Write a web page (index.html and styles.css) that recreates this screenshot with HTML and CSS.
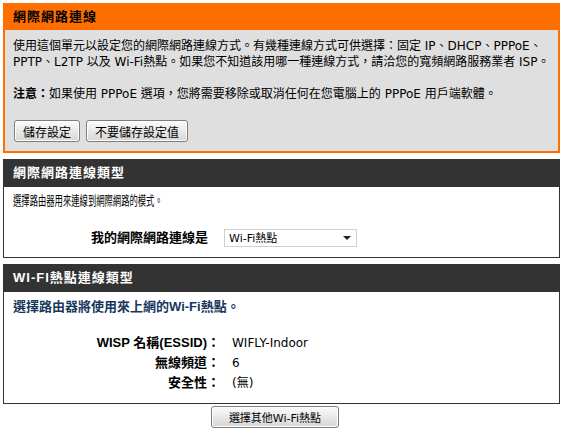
FILE: index.html
```html
<!DOCTYPE html>
<html lang="zh-Hant">
<head>
    <meta charset="UTF-8">
    <title>網際網路連線</title>
    <link rel="stylesheet" href="styles.css">
</head>
<body>
    <div class="page">
        <div class="box box-orange">
            <h2 class="box-head">網際網路連線</h2>
            <div class="box-body">
                <p>使用這個單元以設定您的網際網路連線方式。有幾種連線方式可供選擇：固定 IP、DHCP、PPPoE、<br>PPTP、L2TP 以及 Wi-Fi熱點。如果您不知道該用哪一種連線方式，請洽您的寬頻網路服務業者 ISP。</p>
                <p class="note"><b>注意：</b>如果使用 PPPoE 選項，您將需要移除或取消任何在您電腦上的 PPPoE 用戶端軟體。</p>
                <div class="actions">
                    <button class="btn">儲存設定</button>
                    <button class="btn">不要儲存設定值</button>
                </div>
            </div>
        </div>

        <div class="box">
            <h2 class="box-head">網際網路連線類型</h2>
            <div class="box-body">
                <p><span class="narrow">選擇路由器用來連線到網際網路的模式。</span></p>
                <div class="field-row">
                    <label class="field-label" for="wanType">我的網際網路連線是</label>
                    <span class="select-wrap">
                        <select id="wanType" class="select">
                            <option>Wi-Fi熱點</option>
                        </select>
                        <svg class="select-arrow" width="8" height="4" viewBox="0 0 8 4"><path d="M0 0h8L4 4z" fill="#222"/></svg>
                    </span>
                </div>
            </div>
        </div>

        <div class="box">
            <h2 class="box-head">WI-FI熱點連線類型</h2>
            <div class="box-body">
                <p class="tip">選擇路由器將使用來上網的Wi-Fi熱點。</p>
                <div class="info">
                    <div class="info-row"><span class="info-label">WISP 名稱(ESSID)：</span><span>WIFLY-Indoor</span></div>
                    <div class="info-row"><span class="info-label">無線頻道：</span><span>6</span></div>
                    <div class="info-row"><span class="info-label">安全性：</span><span>(無)</span></div>
                </div>
            </div>
        </div>

        <div class="bottom">
            <button class="btn btn-small">選擇其他Wi-Fi熱點</button>
        </div>
    </div>
</body>
</html>
```

FILE: styles.css
```css
body {
    margin: 0;
    background: #fff;
    color: #000;
    font-family: "DejaVu Sans", "Noto Sans CJK TC", sans-serif;
    font-size: 12px;
    line-height: 16px;
}
.page {
    width: 557px;
    margin: 3px 5px 0 3px;
}
p {
    margin: 0;
}
.box {
    margin-bottom: 6px;
    background: #fff;
}
.box-head {
    margin: 0;
    height: 28px;
    padding-left: 10px;
    background: #333;
    color: #fff;
    font-family: "Liberation Sans", "Noto Sans CJK TC", sans-serif;
    font-size: 13px;
    letter-spacing: 1px;
    line-height: 28px;
}
.box-body {
    border: 1px solid #333;
    border-top: none;
    padding: 6px 9px 10px;
}
.box-orange .box-head {
    height: 27px;
    line-height: 27px;
    background: #ff6f00;
    color: #000;
}
.box-orange .box-body {
    background: #dfdfdf;
    border: 2px solid #ff6f00;
    border-top: none;
    padding: 8px 8px 9px;
}
.note {
    margin-top: 16px;
}
.actions {
    display: flex;
    gap: 6px;
    margin-top: 18px;
    padding-left: 1px;
}
.btn {
    height: 22px;
    padding: 0 8px;
    border: 1px solid #7d7d7d;
    border-radius: 3px;
    background: linear-gradient(#fcfcfc, #e8e8e8 50%, #d6d6d6);
    box-shadow: inset 0 0 0 1px #fff;
    font-family: "DejaVu Sans", "Noto Sans CJK TC", sans-serif;
    font-size: 12px;
    color: #000;
}
.narrow {
    display: inline-block;
    font-size: 13px;
    transform: scaleX(0.64);
    transform-origin: left center;
    white-space: nowrap;
}
.field-row {
    display: flex;
    align-items: center;
    gap: 16px;
    margin-top: 20px;
    margin-left: -9px;
}
.field-label {
    width: 204px;
    text-align: right;
    font-weight: bold;
    font-size: 13px;
}
.select-wrap {
    position: relative;
    display: inline-block;
}
.select {
    appearance: none;
    width: 133px;
    height: 18px;
    padding: 0 4px;
    border: 1px solid #d0d0d0;
    border-radius: 0;
    background: #fff;
    font-family: "DejaVu Sans", "Noto Sans CJK TC", sans-serif;
    font-size: 11px;
    color: #000;
}
.select-arrow {
    position: absolute;
    right: 6px;
    top: 7px;
    pointer-events: none;
}
.tip {
    color: #17375e;
    font-family: "Liberation Sans", "Noto Sans CJK TC", sans-serif;
    font-weight: bold;
    font-size: 13px;
    margin-top: 1px;
}
.info {
    margin: 18px 0 0 -9px;
}
.info-row {
    display: flex;
    gap: 12px;
    height: 20px;
    line-height: 20px;
}
.info-label {
    width: 216px;
    text-align: right;
    font-family: "Liberation Sans", "Noto Sans CJK TC", sans-serif;
    font-weight: bold;
    font-size: 13px;
}
.bottom {
    display: flex;
    justify-content: center;
    margin-top: -4px;
    padding-right: 13px;
}
.btn-small {
    font-size: 11px;
    padding: 0 17px;
}
```
